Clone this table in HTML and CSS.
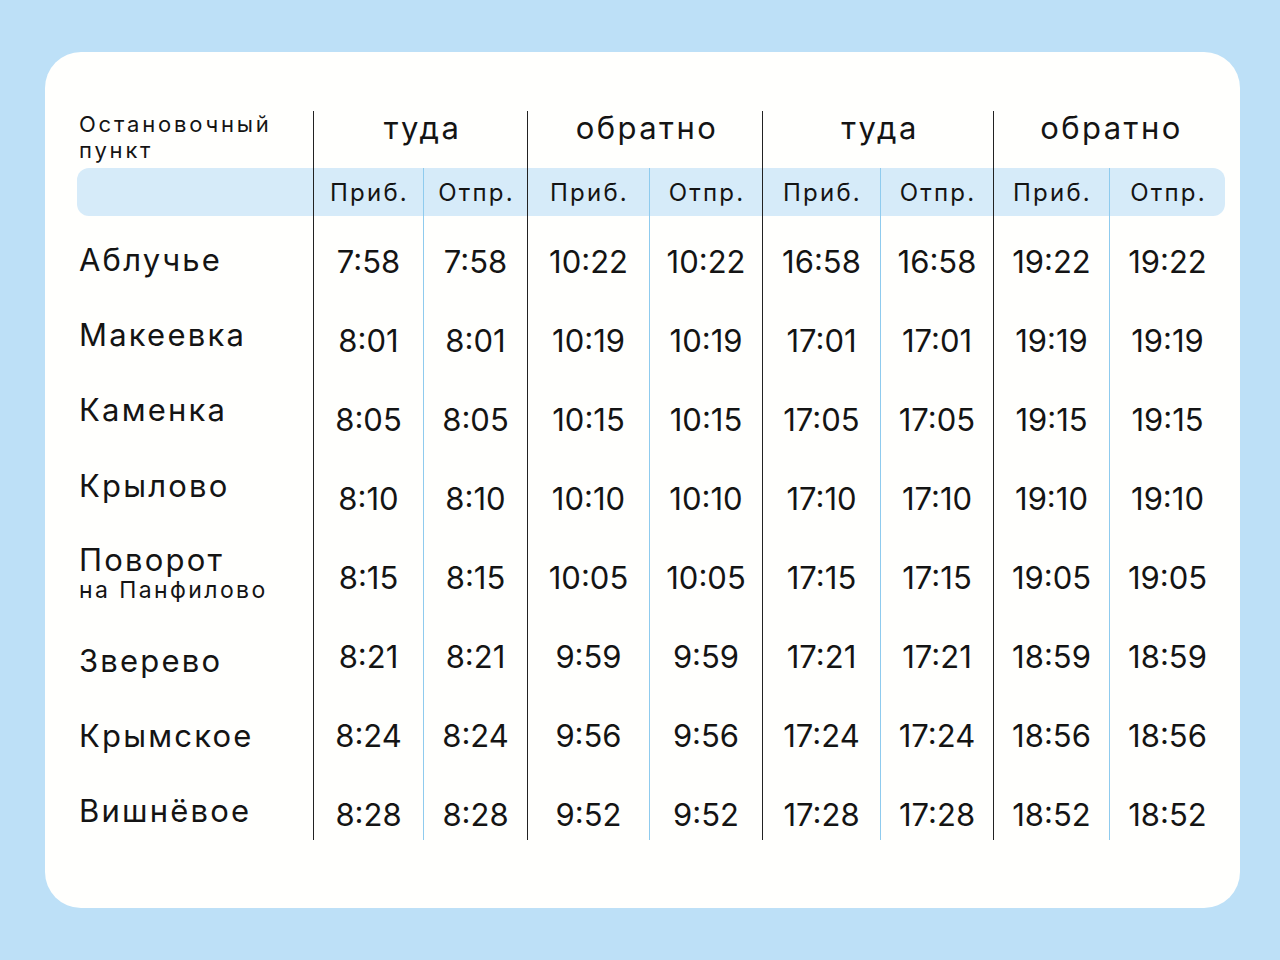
FILE: index.html
```html
<!DOCTYPE html>
<html lang="ru">
<head>
<meta charset="utf-8">
<link rel="stylesheet" href="styles.css">
</head>
<body>
<div class="card">
  <div class="grid">
    <div class="cell head-stop"><span class="hs-line">Остановочный</span><span class="hs-line">пункт</span></div>
    <div class="cell grp">туда</div>
    <div class="cell grp">обратно</div>
    <div class="cell grp">туда</div>
    <div class="cell grp">обратно</div>

    <div class="cell band band-first"></div>
    <div class="cell band sub g">Приб.</div>
    <div class="cell band sub s">Отпр.</div>
    <div class="cell band sub g">Приб.</div>
    <div class="cell band sub s">Отпр.</div>
    <div class="cell band sub g">Приб.</div>
    <div class="cell band sub s">Отпр.</div>
    <div class="cell band sub g">Приб.</div>
    <div class="cell band sub s band-last">Отпр.</div>

    <div class="cell name r-first n1">Аблучье</div>
    <div class="cell t g r-first">7:58</div><div class="cell t s r-first">7:58</div>
    <div class="cell t g r-first">10:22</div><div class="cell t s r-first">10:22</div>
    <div class="cell t g r-first">16:58</div><div class="cell t s r-first">16:58</div>
    <div class="cell t g r-first">19:22</div><div class="cell t s r-first">19:22</div>

    <div class="cell name n2">Макеевка</div>
    <div class="cell t g">8:01</div><div class="cell t s">8:01</div>
    <div class="cell t g">10:19</div><div class="cell t s">10:19</div>
    <div class="cell t g">17:01</div><div class="cell t s">17:01</div>
    <div class="cell t g">19:19</div><div class="cell t s">19:19</div>

    <div class="cell name n3">Каменка</div>
    <div class="cell t g">8:05</div><div class="cell t s">8:05</div>
    <div class="cell t g">10:15</div><div class="cell t s">10:15</div>
    <div class="cell t g">17:05</div><div class="cell t s">17:05</div>
    <div class="cell t g">19:15</div><div class="cell t s">19:15</div>

    <div class="cell name n4">Крылово</div>
    <div class="cell t g">8:10</div><div class="cell t s">8:10</div>
    <div class="cell t g">10:10</div><div class="cell t s">10:10</div>
    <div class="cell t g">17:10</div><div class="cell t s">17:10</div>
    <div class="cell t g">19:10</div><div class="cell t s">19:10</div>

    <div class="cell name name-2 n5">Поворот<span class="name-sub">на Панфилово</span></div>
    <div class="cell t g">8:15</div><div class="cell t s">8:15</div>
    <div class="cell t g">10:05</div><div class="cell t s">10:05</div>
    <div class="cell t g">17:15</div><div class="cell t s">17:15</div>
    <div class="cell t g">19:05</div><div class="cell t s">19:05</div>

    <div class="cell name n6">Зверево</div>
    <div class="cell t g">8:21</div><div class="cell t s">8:21</div>
    <div class="cell t g">9:59</div><div class="cell t s">9:59</div>
    <div class="cell t g">17:21</div><div class="cell t s">17:21</div>
    <div class="cell t g">18:59</div><div class="cell t s">18:59</div>

    <div class="cell name">Крымское</div>
    <div class="cell t g">8:24</div><div class="cell t s">8:24</div>
    <div class="cell t g">9:56</div><div class="cell t s">9:56</div>
    <div class="cell t g">17:24</div><div class="cell t s">17:24</div>
    <div class="cell t g">18:56</div><div class="cell t s">18:56</div>

    <div class="cell name r-last n8">Вишнёвое</div>
    <div class="cell t g r-last">8:28</div><div class="cell t s r-last">8:28</div>
    <div class="cell t g r-last">9:52</div><div class="cell t s r-last">9:52</div>
    <div class="cell t g r-last">17:28</div><div class="cell t s r-last">17:28</div>
    <div class="cell t g r-last">18:52</div><div class="cell t s r-last">18:52</div>
  </div>
</div>
</body>
</html>
```

FILE: styles.css
```css
html, body {
  margin: 0;
  padding: 0;
}
body {
  width: 1280px;
  height: 960px;
  background: #bde0f7;
  font-family: Inter, "Noto Sans", "DejaVu Sans", sans-serif;
  color: #141414;
  padding-top: 52px;
  padding-left: 45px;
  box-sizing: border-box;
}
.card {
  width: 1195px;
  height: 856px;
  box-sizing: border-box;
  background: #fffffd;
  border-radius: 36px;
  padding: 59px 15px 0 32px;
}
.grid {
  display: grid;
  grid-template-columns: 236px 110px 104px 122px 113px 118px 113px 116px 116px;
  grid-template-rows: 57px 48px 85px repeat(6, 79px) 65px;
}
.cell {
  display: flex;
  align-items: center;
  justify-content: center;
  box-sizing: border-box;
  white-space: nowrap;
}
.head-stop {
  flex-direction: column;
  align-items: flex-start;
  justify-content: flex-start;
  font-size: 22px;
  line-height: 26px;
  letter-spacing: 2.8px;
  padding-left: 2px;
}
.hs-line {
  display: block;
}
.grp {
  grid-column: span 2;
  align-items: flex-start;
  font-size: 31px;
  line-height: 34px;
  letter-spacing: 2.4px;
  padding-left: 4px;
  border-left: 1px solid #222;
}
.band {
  background: #d6ebf9;
}
.band-first {
  border-radius: 12px 0 0 12px;
}
.band-last {
  border-radius: 0 12px 12px 0;
}
.sub {
  font-size: 24px;
  letter-spacing: 2.2px;
  padding-left: 2px;
}
.g {
  border-left: 1px solid #222;
}
.s {
  border-left: 1px solid #8fcbee;
}
.name {
  justify-content: flex-start;
  padding-left: 2px;
  font-size: 31px;
  letter-spacing: 2.2px;
}
.name-2 {
  flex-direction: column;
  align-items: flex-start;
  justify-content: center;
  line-height: 33px;
}
.name-sub {
  font-size: 23px;
  line-height: 28px;
  letter-spacing: 2.4px;
}
.t {
  font-size: 31px;
}
.r-first {
  padding-top: 6px;
}
.r-last {
  align-items: flex-start;
  padding-top: 22px;
  line-height: 36px;
}
.n1 { padding-top: 2px; }
.n2 { padding-bottom: 12px; }
.n3 { padding-bottom: 20px; }
.n4 { padding-bottom: 26px; }
.n5 { padding-bottom: 8px; }
.n6 { padding-top: 8px; }
.n8 { padding-top: 18px; }
```
